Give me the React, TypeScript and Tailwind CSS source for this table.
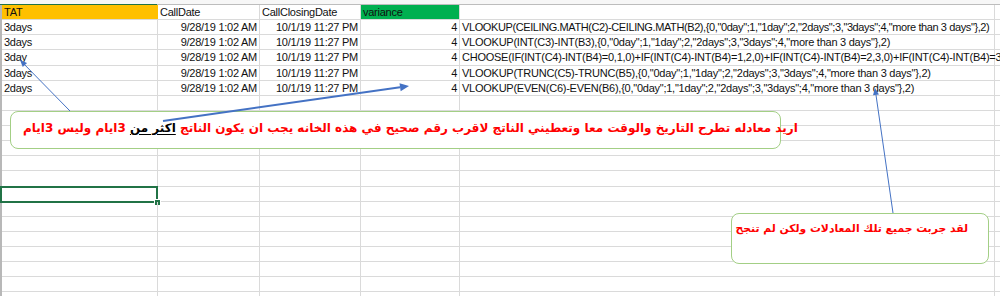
import React from 'react';

const ROW_H = 'h-[15.13px]';
const cellFont = { fontFamily: '"Liberation Sans", Arial, sans-serif' };
const arabicFont = { fontFamily: '"DejaVu Sans", Arial, sans-serif' };

interface Row {
  tat: string;
  callDate: string;
  closeDate: string;
  variance: string;
  formula: string;
  tight?: boolean;
}

const rows: Row[] = [
  { tat: '3days', callDate: '9/28/19 1:02 AM', closeDate: '10/1/19 11:27 PM', variance: '4', formula: 'VLOOKUP(CEILING.MATH(C2)-CEILING.MATH(B2),{0,"0day";1,"1day";2,"2days";3,"3days";4,"more than 3 days"},2)', tight: true },
  { tat: '3days', callDate: '9/28/19 1:02 AM', closeDate: '10/1/19 11:27 PM', variance: '4', formula: 'VLOOKUP(INT(C3)-INT(B3),{0,"0day";1,"1day";2,"2days";3,"3days";4,"more than 3 days"},2)' },
  { tat: '3day', callDate: '9/28/19 1:02 AM', closeDate: '10/1/19 11:27 PM', variance: '4', formula: 'CHOOSE(IF(INT(C4)-INT(B4)=0,1,0)+IF(INT(C4)-INT(B4)=1,2,0)+IF(INT(C4)-INT(B4)=2,3,0)+IF(INT(C4)-INT(B4)=3,4,0+IF(' },
  { tat: '3days', callDate: '9/28/19 1:02 AM', closeDate: '10/1/19 11:27 PM', variance: '4', formula: 'VLOOKUP(TRUNC(C5)-TRUNC(B5),{0,"0day";1,"1day";2,"2days";3,"3days";4,"more than 3 days"},2)' },
  { tat: '2days', callDate: '9/28/19 1:02 AM', closeDate: '10/1/19 11:27 PM', variance: '4', formula: 'VLOOKUP(EVEN(C6)-EVEN(B6),{0,"0day";1,"1day";2,"2days";3,"3days";4,"more than 3 days"},2)' },
];

const EMPTY_ROWS = 14;
const SELECTED = 6; // index among empty rows -> row 13 (A13)

function Arrow({ x1, y1, x2, y2, w, len, half }: { x1: number; y1: number; x2: number; y2: number; w: number; len: number; half: number }) {
  const a = Math.atan2(y2 - y1, x2 - x1);
  const bx = x2 - Math.cos(a) * len;
  const by = y2 - Math.sin(a) * len;
  const px = -Math.sin(a) * half;
  const py = Math.cos(a) * half;
  return (
    <g>
      <line x1={x1} y1={y1} x2={bx} y2={by} stroke="#4472c4" strokeWidth={w} />
      <polygon points={`${x2},${y2} ${bx + px},${by + py} ${bx - px},${by - py}`} fill="#4472c4" />
    </g>
  );
}

function Cell({ w, className = '', children }: { w: string; className?: string; children?: React.ReactNode }) {
  return (
    <div className={`${w} shrink-0 border-r border-[#dadada] whitespace-nowrap px-[2px] leading-[14px] text-[11px] text-[#111] ${className}`}>
      {children}
    </div>
  );
}

export default function App() {
  return (
    <div className="relative w-[1000px] h-[296px] overflow-hidden bg-white">
      {/* column header edge */}
      <div className="h-[4px] bg-[#f7f7f7]" />
      <div className="flex h-[1px]">
        <div className="w-[157px] bg-[#217346]" />
        <div className="flex-1 bg-[#bdbdbd]" />
      </div>

      <div className="border-l-2 border-[#b8b8b8] tracking-[-0.25px]" style={cellFont}>
        {/* header row */}
        <div className={`flex ${ROW_H} border-b border-[#dadada]`}>
          <Cell w="w-[156px]" className="bg-[#ffc000] border-[#ffc000]">TAT</Cell>
          <Cell w="w-[102px]">CallDate</Cell>
          <Cell w="w-[101px]">CallClosingDate</Cell>
          <Cell w="w-[99px]" className="bg-[#00b050] border-[#00b050]">variance</Cell>
          <Cell w="w-[535px]" />
          <div className="flex-1" />
        </div>

        {rows.map((r, i) => (
          <div key={i} className={`flex ${ROW_H} border-b border-[#dadada]`}>
            <Cell w="w-[156px]">{r.tat}</Cell>
            <Cell w="w-[102px]" className="text-right">{r.callDate}</Cell>
            <Cell w="w-[101px]" className="text-right">{r.closeDate}</Cell>
            <Cell w="w-[99px]" className="text-right">{r.variance}</Cell>
            <Cell w="w-[535px]" className={r.tight ? 'overflow-visible tracking-[-0.4px]' : 'overflow-visible'}>
              {r.formula}
            </Cell>
            <div className="flex-1" />
          </div>
        ))}

        {Array.from({ length: EMPTY_ROWS }).map((_, i) => (
          <div key={`e${i}`} className={`flex ${ROW_H} border-b border-[#dadada]`}>
            <Cell w="w-[156px]" className="relative">
              {i === SELECTED && (
                <>
                  <div className="absolute -top-[1px] -left-[2px] w-[158px] h-[17px] border-2 border-[#217346]" />
                  <div className="absolute top-[13px] left-[153px] w-[5px] h-[5px] bg-[#217346] outline outline-1 outline-white" />
                </>
              )}
            </Cell>
            <Cell w="w-[102px]" />
            <Cell w="w-[101px]" />
            <Cell w="w-[99px]" />
            <Cell w="w-[535px]" />
            <div className="flex-1" />
          </div>
        ))}
      </div>

      {/* callout 1 */}
      <div className="absolute left-[10px] top-[111px] w-[771px] h-[38px] rounded-[8px] border border-[#a3cf85] bg-white flex items-start pl-[12px] pt-[7px]">
        <span dir="rtl" className="text-[12px] font-bold text-[#ff0000] whitespace-nowrap leading-[18px]" style={arabicFont}>
          اريد معادله تطرح التاريخ والوقت معا وتعطيني الناتج لاقرب رقم صحيح في هذه الخانه يجب ان يكون الناتج{' '}
          <span className="text-black underline underline-offset-2">اكثر من</span> 3ايام وليس 3ايام
        </span>
      </div>

      {/* callout 2 */}
      <div className="absolute left-[731px] top-[213px] w-[258px] h-[51px] rounded-[8px] border border-[#a3cf85] bg-white flex items-start justify-end pr-[20px] pt-[6px]">
        <span dir="rtl" className="text-[10.8px] font-bold text-[#ff0000] whitespace-nowrap leading-[18px]" style={arabicFont}>
          لقد جربت جميع تلك المعادلات ولكن لم تنجح
        </span>
      </div>

      {/* connector arrows */}
      <svg className="absolute inset-0 pointer-events-none" width={1000} height={296}>
        <Arrow x1={70} y1={111} x2={20} y2={60} w={1} len={7} half={3} />
        <Arrow x1={163} y1={121} x2={409} y2={86} w={2} len={9} half={4} />
        <Arrow x1={893} y1={213} x2={875} y2={88} w={1} len={7} half={3} />
      </svg>
    </div>
  );
}
